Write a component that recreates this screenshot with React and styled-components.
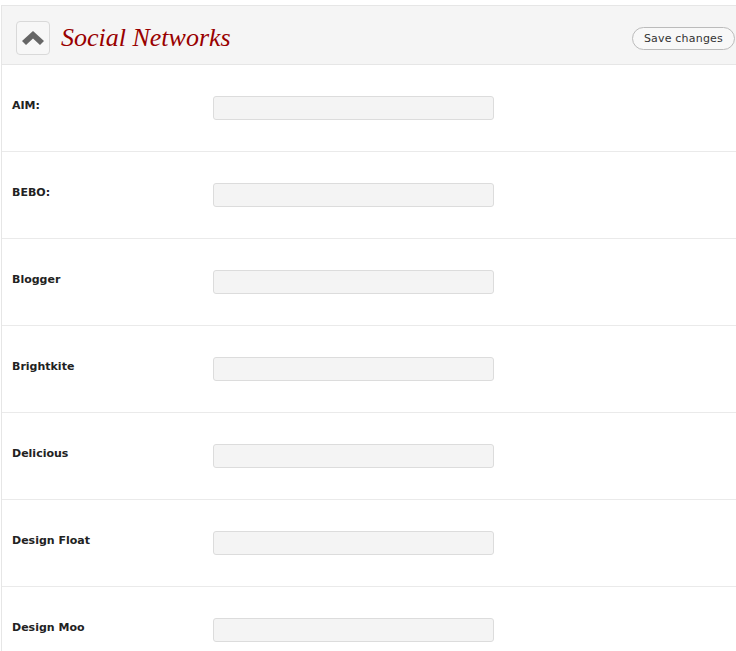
import React from "react";
import styled, { createGlobalStyle } from "styled-components";

const Global = createGlobalStyle`
  html, body { margin: 0; padding: 0; background: #fff; overflow: hidden; }
  body { font-family: "DejaVu Sans", Verdana, sans-serif; }
`;

const Panel = styled.div`
  margin: 5px 0 0 1px;
  width: 760px;
  border: 1px solid #e6e6e6;
  border-right: none;
  background: #fff;
`;

const Header = styled.div`
  display: flex;
  align-items: center;
  height: 59px;
  box-sizing: border-box;
  padding: 6px 0 0 14px;
  background: #f5f5f5;
  border-bottom: 1px solid #e6e6e6;
`;

const Toggle = styled.div`
  width: 32px;
  height: 32px;
  border: 1px solid #d9d9d9;
  border-radius: 4px;
  background: #f7f7f7;
  display: flex;
  align-items: center;
  justify-content: center;
`;

const Title = styled.h2`
  margin: 0 0 0 11px;
  font-family: "Liberation Serif", Georgia, serif;
  font-style: italic;
  font-weight: normal;
  font-size: 26px;
  color: #990000;
  flex: 1;
`;

const SaveButton = styled.button`
  margin-right: 27px;
  height: 23px;
  padding: 0 11px;
  border: 1px solid #bbb;
  border-radius: 12px;
  background: #f8f8f8;
  font-family: "DejaVu Sans", Verdana, sans-serif;
  font-size: 11px;
  color: #333;
  letter-spacing: 0.2px;
`;

const Row = styled.div`
  display: grid;
  grid-template-columns: 201px 281px;
  height: 87px;
  box-sizing: border-box;
  padding: 31px 0 0 10px;
  border-bottom: 1px solid #eaeaea;
`;

const Label = styled.label`
  padding-top: 2px;
  font-size: 11px;
  font-weight: bold;
  color: #222;
  line-height: 16px;
`;

const Field = styled.input`
  width: 281px;
  height: 24px;
  box-sizing: border-box;
  border: 1px solid #dcdcdc;
  border-radius: 3px;
  background: #f4f4f4;
  margin: 0;
  padding: 0 4px;
`;

const networks = ["AIM:", "BEBO:", "Blogger", "Brightkite", "Delicious", "Design Float", "Design Moo"];

export default function App() {
  return (
    <>
      <Global />
      <Panel>
        <Header>
          <Toggle>
            <svg width="22" height="16" viewBox="0 0 22 16">
              <polygon points="0,11 11,1 22,11 18,15 11,8.5 4,15" fill="#666" />
            </svg>
          </Toggle>
          <Title>Social Networks</Title>
          <SaveButton>Save changes</SaveButton>
        </Header>
        {networks.map((n) => (
          <Row key={n}>
            <Label>{n}</Label>
            <Field type="text" />
          </Row>
        ))}
      </Panel>
    </>
  );
}
